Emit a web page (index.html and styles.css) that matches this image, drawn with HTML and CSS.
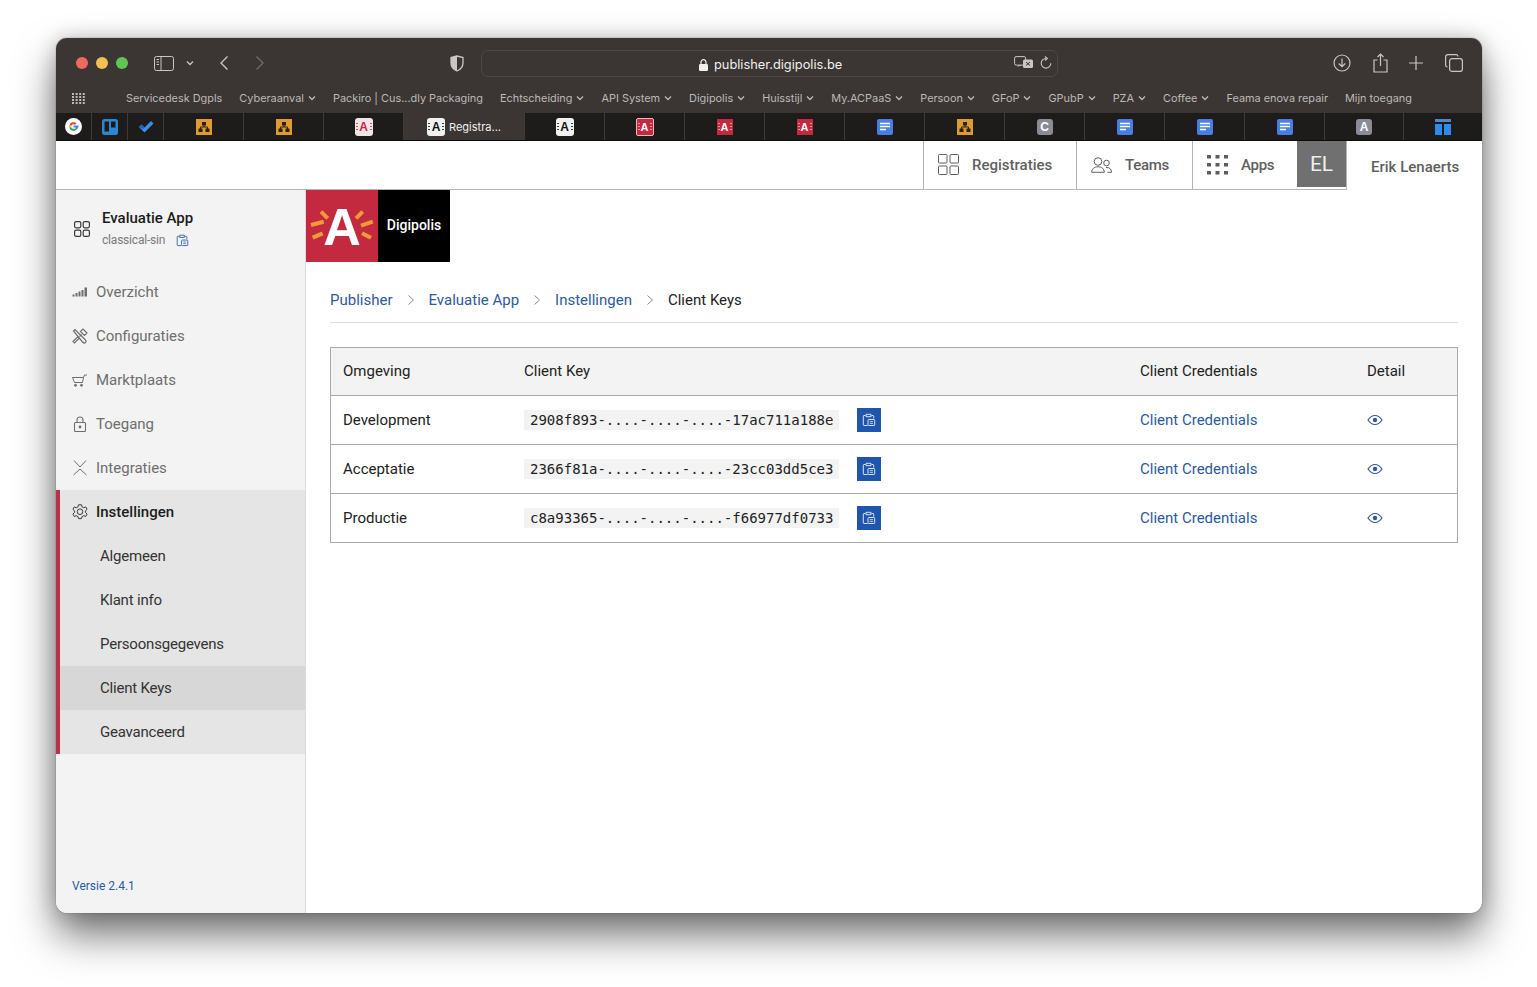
FILE: index.html
```html
<!DOCTYPE html>
<html lang="en">
<head>
    <meta charset="UTF-8">
    <title>Client Keys - Publisher</title>
    <link rel="stylesheet" href="styles.css">
</head>
<body>
    <svg class="defs" width="0" height="0">
        <symbol id="org" viewBox="0 0 16 16">
            <rect width="16" height="16" fill="#dd9b32"/>
            <path d="M6 3h4v3.500H6zM2.500 9.500h4V13h-4zM9.500 9.500h4V13h-4z" fill="#2b2114"/>
            <path d="M8 6v2M4.500 10V8h7v2" stroke="#2b2114" fill="none"/>
        </symbol>
        <symbol id="doc" viewBox="0 0 16 16">
            <rect width="16" height="16" rx="2" fill="#4a7fe0"/>
            <path d="M3 4.500h10M3 7.500h10M3 10.500h6" stroke="#fff" stroke-width="1.600"/>
        </symbol>
        <symbol id="copy" viewBox="0 0 14 14">
            <path d="M3.500 2.500H2a.7.7 0 0 0-.7.7v8.600a.7.7 0 0 0 .7.7h3.500M9.500 2.500H11a.7.7 0 0 1 .7.7v2.300M4 1.300h5v2.400H4z" fill="none" stroke="currentColor"/>
            <rect x="6" y="6.500" width="6.700" height="6" rx=".8" fill="none" stroke="currentColor"/>
            <path d="M7.800 8.600h3.200M7.800 10.400h3.200" stroke="currentColor" stroke-width=".8"/>
        </symbol>
        <symbol id="eye" viewBox="0 0 16 12">
            <path d="M1 6c2-3 4.300-4.500 7-4.500S13 3 15 6c-2 3-4.300 4.500-7 4.500S3 9 1 6z" fill="none" stroke="currentColor" stroke-width="1.200"/>
            <circle cx="8" cy="6" r="2.200" fill="currentColor"/>
        </symbol>
        <symbol id="caret" viewBox="0 0 8 6">
            <path d="M1 1.500 4 4.500 7 1.500" fill="none" stroke="currentColor" stroke-width="1.300"/>
        </symbol>
        <symbol id="crumb" viewBox="0 0 8 12">
            <path d="M1.500 1.500 6.500 6 1.500 10.500" fill="none" stroke="currentColor"/>
        </symbol>
    </svg>

    <div class="window">
        <div class="window-clip">
            <div class="toolbar">
                <div class="lights">
                    <span class="light red"></span>
                    <span class="light yellow"></span>
                    <span class="light green"></span>
                </div>
                <svg class="tool sidebar-toggle" width="20" height="15" viewBox="0 0 20 15"><rect x=".5" y=".5" width="19" height="14" rx="2" fill="none" stroke="currentColor"/><path d="M7 .5v14" stroke="currentColor"/><path d="M2.500 3.500h2.500M2.500 6h2.500M2.500 8.500h2.500" stroke="currentColor"/></svg>
                <svg class="tool sidebar-caret" width="8" height="6"><use href="#caret"/></svg>
                <svg class="tool back" width="10" height="16" viewBox="0 0 10 16"><path d="M8.500 1.500 2 8l6.500 6.500" fill="none" stroke="currentColor" stroke-width="1.400"/></svg>
                <svg class="tool forward" width="10" height="16" viewBox="0 0 10 16"><path d="M1.500 1.500 8 8l-6.500 6.500" fill="none" stroke="currentColor" stroke-width="1.400"/></svg>
                <svg class="tool shield" width="14" height="17" viewBox="0 0 14 17"><path d="M7 1 1 2.500V8c0 4 2.500 6.500 6 8 3.500-1.500 6-4 6-8V2.500z" fill="none" stroke="currentColor" stroke-width="1.300"/><path d="M7 1 1 2.500V8c0 4 2.500 6.500 6 8z" fill="currentColor"/></svg>
                <div class="address">
                    <div class="address-url">
                        <svg width="9" height="12" viewBox="0 0 9 12"><rect y="5" width="9" height="7" rx="1.200" fill="currentColor"/><path d="M2 5.500V3.200a2.500 2.500 0 0 1 5 0v2.300" fill="none" stroke="currentColor" stroke-width="1.200"/></svg>
                        <span>publisher.digipolis.be</span>
                    </div>
                    <svg class="translate" width="20" height="14" viewBox="0 0 20 14"><rect x=".6" y=".6" width="11" height="8.500" rx="1.500" fill="none" stroke="currentColor"/><path d="M3 11l2-2h3z" fill="currentColor"/><rect x="9" y="3.500" width="10" height="8.500" rx="1.500" fill="currentColor"/><path d="M12 6l4 3.500M16 6l-4 3.500" stroke="#3b3533"/></svg>
                    <svg class="reload" width="12" height="14" viewBox="0 0 12 14"><path d="M6 2.500a4.800 4.800 0 1 0 4.800 4.800" fill="none" stroke="currentColor" stroke-width="1.100"/><path d="M5 .5 7.300 2.500 5 4.500" fill="none" stroke="currentColor" stroke-width="1.100"/></svg>
                </div>
                <div class="toolbar-right">
                    <svg width="18" height="18" viewBox="0 0 18 18"><circle cx="9" cy="9" r="8" fill="none" stroke="currentColor" stroke-width="1.200"/><path d="M9 4.500v8M5.800 9.500 9 12.700l3.200-3.200" fill="none" stroke="currentColor" stroke-width="1.200"/></svg>
                    <svg width="15" height="20" viewBox="0 0 15 20"><path d="M4.500 7H1v12h13V7h-3.500M7.500 13V1M4.500 4l3-3 3 3" fill="none" stroke="currentColor" stroke-width="1.200"/></svg>
                    <svg width="14" height="14" viewBox="0 0 14 14"><path d="M7 0v14M0 7h14" stroke="currentColor" stroke-width="1.200"/></svg>
                    <svg width="18" height="18" viewBox="0 0 18 18"><rect x="4.600" y="4.600" width="12.800" height="12.800" rx="2.500" fill="none" stroke="currentColor" stroke-width="1.200"/><path d="M2.500 13A2 2 0 0 1 .6 11V3A2.500 2.500 0 0 1 3 .6h8A2 2 0 0 1 13 2.500" fill="none" stroke="currentColor" stroke-width="1.200"/></svg>
                </div>
            </div>

            <div class="bookmarks">
                <svg class="bm-grid" width="13" height="11" viewBox="0 0 13 11" fill="currentColor"><path d="M0 0h2v2H0zM3.600 0h2v2h-2zM7.200 0h2v2h-2zM10.800 0h2v2h-2zM0 3h2v2H0zM3.600 3h2v2h-2zM7.200 3h2v2h-2zM10.800 3h2v2h-2zM0 6h2v2H0zM3.600 6h2v2h-2zM7.200 6h2v2h-2zM10.800 6h2v2h-2zM0 9h2v2H0zM3.600 9h2v2h-2zM7.200 9h2v2h-2zM10.800 9h2v2h-2z"/></svg>
                <span class="bm">Servicedesk Dgpls</span>
                <span class="bm">Cyberaanval <svg width="8" height="6"><use href="#caret"/></svg></span>
                <span class="bm">Packiro | Cus...dly Packaging</span>
                <span class="bm">Echtscheiding <svg width="8" height="6"><use href="#caret"/></svg></span>
                <span class="bm">API System <svg width="8" height="6"><use href="#caret"/></svg></span>
                <span class="bm">Digipolis <svg width="8" height="6"><use href="#caret"/></svg></span>
                <span class="bm">Huisstijl <svg width="8" height="6"><use href="#caret"/></svg></span>
                <span class="bm">My.ACPaaS <svg width="8" height="6"><use href="#caret"/></svg></span>
                <span class="bm">Persoon <svg width="8" height="6"><use href="#caret"/></svg></span>
                <span class="bm">GFoP <svg width="8" height="6"><use href="#caret"/></svg></span>
                <span class="bm">GPubP <svg width="8" height="6"><use href="#caret"/></svg></span>
                <span class="bm">PZA <svg width="8" height="6"><use href="#caret"/></svg></span>
                <span class="bm">Coffee <svg width="8" height="6"><use href="#caret"/></svg></span>
                <span class="bm">Feama enova repair</span>
                <span class="bm">Mijn toegang</span>
            </div>

            <div class="tabs">
                <div class="tab tab-pin">
                    <svg width="17" height="17" viewBox="0 0 18 18"><circle cx="9" cy="9" r="9" fill="#fff"/><path d="M5.700 8a3.500 3.500 0 0 1 5.700-1.600" fill="none" stroke="#e94235" stroke-width="2.200"/><path d="M5.600 8a3.500 3.500 0 0 0 0 2" fill="none" stroke="#fabb05" stroke-width="2.200"/><path d="M5.600 10a3.500 3.500 0 0 0 5.900 1.500" fill="none" stroke="#34a853" stroke-width="2.200"/><path d="M9 9h4.300a4 4 0 0 1-1.800 2.500" fill="none" stroke="#4285f4" stroke-width="2"/></svg>
                </div>
                <div class="tab tab-pin">
                    <svg width="16" height="16" viewBox="0 0 16 16"><rect width="16" height="16" rx="2.500" fill="#2c86d0"/><rect x="2.500" y="2.500" width="4.500" height="10" fill="#1c1a19"/><rect x="9" y="2.500" width="4.500" height="6" fill="#1c1a19"/></svg>
                </div>
                <div class="tab tab-pin">
                    <svg width="16" height="13" viewBox="0 0 16 13"><path d="M1 7l2.500-2.500 3 3L13 1l2.500 2.500-9 9z" fill="#3b8fe8"/><path d="M1 7l2.500-2.500 3 3-1.500 1.500z" fill="#1e62b8"/></svg>
                </div>
                <div class="tab"><svg width="16" height="16"><use href="#org"/></svg></div>
                <div class="tab"><svg width="16" height="16"><use href="#org"/></svg></div>
                <div class="tab"><span class="fav fav-light">A</span></div>
                <div class="tab tab-active"><span class="fav fav-white">A</span><span class="tab-title">Registra...</span></div>
                <div class="tab"><span class="fav fav-white">A</span></div>
                <div class="tab"><span class="fav fav-red fav-ring">A</span></div>
                <div class="tab"><span class="fav fav-red">A</span></div>
                <div class="tab"><span class="fav fav-red">A</span></div>
                <div class="tab"><svg width="16" height="16"><use href="#doc"/></svg></div>
                <div class="tab"><svg width="16" height="16"><use href="#org"/></svg></div>
                <div class="tab"><span class="fav fav-gray">C</span></div>
                <div class="tab"><svg width="16" height="16"><use href="#doc"/></svg></div>
                <div class="tab"><svg width="16" height="16"><use href="#doc"/></svg></div>
                <div class="tab"><svg width="16" height="16"><use href="#doc"/></svg></div>
                <div class="tab tab-narrow"><span class="fav fav-gray">A</span></div>
                <div class="tab tab-last">
                    <svg width="16" height="16" viewBox="0 0 16 16"><rect width="16" height="3" fill="#4f86c6"/><rect y="5" width="7" height="11" fill="#2e8bea"/><rect x="9" y="5" width="7" height="11" fill="#2e8bea"/></svg>
                </div>
            </div>

            <header class="app-header">
                <div class="header-space"></div>
                <a class="header-item item-registraties">
                    <svg width="21" height="21" viewBox="0 0 21 21" fill="none" stroke="currentColor"><rect x=".5" y=".5" width="8.500" height="8.500" rx="1"/><rect x="12" y=".5" width="8.500" height="8.500" rx="1"/><rect x=".5" y="12" width="8.500" height="8.500" rx="1"/><rect x="12" y="12" width="8.500" height="8.500" rx="1"/></svg>
                    Registraties
                </a>
                <a class="header-item item-teams">
                    <svg width="21" height="16" viewBox="0 0 21 16" fill="none" stroke="currentColor"><circle cx="7" cy="4.500" r="3.800"/><path d="M.7 15.300c0-3.500 2.500-5.500 6.300-5.500s6.300 2 6.300 5.500z"/><circle cx="15.500" cy="6" r="2.800"/><path d="M15 10.500c3.500-.3 5.500 1.500 5.500 4.800h-4"/></svg>
                    Teams
                </a>
                <a class="header-item item-apps">
                    <svg width="21" height="20" viewBox="0 0 21 20" fill="currentColor"><path d="M0 0h4v3.500H0zM8.500 0h4v3.500h-4zM17 0h4v3.500h-4zM0 8h4v3.500H0zM8.500 8h4v3.500h-4zM17 8h4v3.500h-4zM0 16h4v3.500H0zM8.500 16h4v3.500h-4zM17 16h4v3.500h-4z"/></svg>
                    Apps
                </a>
                <div class="avatar-wrap"><div class="avatar">EL</div></div>
                <div class="user-name">Erik Lenaerts</div>
            </header>

            <div class="app-body">
                <aside class="sidebar">
                    <div class="app-info">
                        <svg width="16" height="16" viewBox="0 0 16 16" fill="none" stroke="#3a3a3a" stroke-width="1.200"><rect x=".6" y=".6" width="6.200" height="6.200" rx="1.500"/><rect x="9.200" y=".6" width="6.200" height="6.200" rx="1.500"/><rect x=".6" y="9.200" width="6.200" height="6.200" rx="1.500"/><rect x="9.200" y="9.200" width="6.200" height="6.200" rx="1.500"/></svg>
                        <div>
                            <div class="app-title">Evaluatie App</div>
                            <div class="app-sub">classical-sin <svg class="app-copy" width="13" height="13"><use href="#copy"/></svg></div>
                        </div>
                    </div>

                    <nav>
                        <a class="nav-item">
                            <svg width="16" height="10" viewBox="0 0 16 10" fill="currentColor"><path d="M.5 7.500h2v2h-2zM3.500 6h2v3.500h-2zM6.500 4.500h2v5h-2zM9.500 3h2v6.500h-2zM12.500.5H15v9h-2.500z"/></svg>
                            Overzicht
                        </a>
                        <a class="nav-item">
                            <svg width="16" height="16" viewBox="0 0 16 16" fill="none" stroke="currentColor" stroke-width="1.200"><path d="M1 13.500 5.500 9l1.500 1.500-4.500 4.500zM7.500 8.500l2-2M8.500 3.500l2.500-2.500 4 4-2.500 2.500z"/><path d="M1.500 3 3 1.500l10 10c1 1 1.500 2 .5 3s-2 .5-3-.5z"/></svg>
                            Configuraties
                        </a>
                        <a class="nav-item">
                            <svg width="16" height="13" viewBox="0 0 16 13" fill="none" stroke="currentColor"><path d="M.5 3.500h11l-1 5h-8zM11.500 3.500 12.500 1h2.500"/><circle cx="3.500" cy="11.300" r="1" fill="currentColor"/><circle cx="9.500" cy="11.300" r="1" fill="currentColor"/></svg>
                            Marktplaats
                        </a>
                        <a class="nav-item">
                            <svg width="16" height="16" viewBox="0 0 15 16" fill="none" stroke="currentColor" stroke-width="1.100"><rect x="2" y="6.500" width="11" height="9" rx="1"/><path d="M4.500 6.500V4a3 3 0 0 1 6 0v2.500"/><circle cx="7.500" cy="11" r=".9" fill="currentColor"/></svg>
                            Toegang
                        </a>
                        <a class="nav-item">
                            <svg width="16" height="16" viewBox="0 0 15 16" fill="none" stroke="currentColor"><path d="M1.500 .5 7.500 7l6-6.500M1 15l6.500-6 6.500 6"/></svg>
                            Integraties
                        </a>
                        <div class="nav-group">
                            <a class="nav-item nav-head">
                                <svg width="16" height="16" viewBox="0 0 16 16" fill="none" stroke="currentColor"><path d="M6.500 .8h3l.5 2 1.800.9 1.900-.8 1.400 2.400-1.500 1.400v2l1.500 1.400-1.400 2.400-1.900-.8-1.800.9-.5 2h-3l-.5-2-1.800-.9-1.900.8L.9 10.100l1.500-1.400v-2L.9 5.300l1.400-2.400 1.900.8 1.800-.9z"/><circle cx="8" cy="7.700" r="2.800"/></svg>
                                Instellingen
                            </a>
                            <a class="nav-sub">Algemeen</a>
                            <a class="nav-sub">Klant info</a>
                            <a class="nav-sub">Persoonsgegevens</a>
                            <a class="nav-sub is-current">Client Keys</a>
                            <a class="nav-sub">Geavanceerd</a>
                        </div>
                    </nav>

                    <div class="version">Versie 2.4.1</div>
                </aside>

                <main class="content">
                    <div class="logo">
                        <div class="logo-mark">
                            <svg width="72" height="72" viewBox="0 0 72 72">
                                <text class="logo-a" x="36" y="55" text-anchor="middle">A</text>
                                <path class="logo-rays" d="M15 21.700l6.700 6.600M5 35l12.700-3.300M6.700 47.700l10-4.400M56.700 21.700 50 28.300M66.700 31.700 55 35.700M65 47.700l-9-4.400"/>
                            </svg>
                        </div>
                        <div class="logo-name">Digipolis</div>
                    </div>

                    <div class="breadcrumb">
                        <a>Publisher</a>
                        <svg width="8" height="12"><use href="#crumb"/></svg>
                        <a>Evaluatie App</a>
                        <svg width="8" height="12"><use href="#crumb"/></svg>
                        <a>Instellingen</a>
                        <svg width="8" height="12"><use href="#crumb"/></svg>
                        <span>Client Keys</span>
                    </div>

                    <table class="keys">
                        <thead>
                            <tr>
                                <th class="col-env">Omgeving</th>
                                <th class="col-key">Client Key</th>
                                <th class="col-cred">Client Credentials</th>
                                <th>Detail</th>
                            </tr>
                        </thead>
                        <tbody>
                            <tr>
                                <td>Development</td>
                                <td><div class="key-cell"><code>2908f893-....-....-....-17ac711a188e</code><button type="button" class="copy"><svg width="14" height="14"><use href="#copy"/></svg></button></div></td>
                                <td><a>Client Credentials</a></td>
                                <td><svg class="eye" width="16" height="12"><use href="#eye"/></svg></td>
                            </tr>
                            <tr>
                                <td>Acceptatie</td>
                                <td><div class="key-cell"><code>2366f81a-....-....-....-23cc03dd5ce3</code><button type="button" class="copy"><svg width="14" height="14"><use href="#copy"/></svg></button></div></td>
                                <td><a>Client Credentials</a></td>
                                <td><svg class="eye" width="16" height="12"><use href="#eye"/></svg></td>
                            </tr>
                            <tr>
                                <td>Productie</td>
                                <td><div class="key-cell"><code>c8a93365-....-....-....-f66977df0733</code><button type="button" class="copy"><svg width="14" height="14"><use href="#copy"/></svg></button></div></td>
                                <td><a>Client Credentials</a></td>
                                <td><svg class="eye" width="16" height="12"><use href="#eye"/></svg></td>
                            </tr>
                        </tbody>
                    </table>
                </main>
            </div>
        </div>
    </div>
</body>
</html>
```

FILE: styles.css
```css
html, body {
    margin: 0;
    height: 100%;
    background: #fff;
    overflow: hidden;
}

body {
    padding: 38px 0 0 56px;
    box-sizing: border-box;
    font-family: Roboto, sans-serif;
    font-size: 15px;
    color: #222;
}

.defs {
    display: block;
    height: 0;
}

.window {
    width: 1426px;
    height: 875px;
    border-radius: 11px;
    background: #fff;
    box-shadow: 0 0 1px rgba(0, 0, 0, 0.7), 0 22px 40px rgba(0, 0, 0, 0.55), 0 0 20px rgba(0, 0, 0, 0.2);
}

.window-clip {
    height: 100%;
    display: flex;
    flex-direction: column;
    border-radius: 11px;
    overflow: hidden;
}

/* browser toolbar */
.toolbar {
    height: 46px;
    flex: none;
    display: flex;
    align-items: center;
    background: #3b3533;
    color: #c9c6c4;
    padding-top: 4px;
    box-sizing: border-box;
}

.lights {
    display: flex;
    gap: 8px;
    margin-left: 20px;
}

.light {
    width: 12px;
    height: 12px;
    border-radius: 50%;
}

.red { background: #ed6a5e; }
.yellow { background: #f4bf4f; }
.green { background: #61c554; }

.sidebar-toggle { margin-left: 26px; }
.sidebar-caret { margin-left: 12px; }
.back { margin-left: 25px; }
.forward { margin-left: 26px; color: #6f6a68; }
.shield { margin-left: 185px; }

.address {
    width: 577px;
    height: 27px;
    margin-left: 17px;
    box-sizing: border-box;
    border: 1px solid #4e4946;
    border-radius: 7px;
    display: flex;
    align-items: center;
    position: relative;
    color: #f1f0ef;
}

.address-url {
    position: absolute;
    left: 217px;
    top: 5px;
    display: flex;
    align-items: center;
    gap: 6px;
    font-family: Inter, sans-serif;
    font-size: 12.8px;
    line-height: 18px;
}

.translate {
    margin-left: 532px;
    color: #c9c6c4;
}

.reload {
    margin-left: 6px;
    color: #c9c6c4;
}

.toolbar-right {
    display: flex;
    align-items: center;
    gap: 21.5px;
    margin-left: 275px;
}

/* bookmarks bar */
.bookmarks {
    height: 29px;
    flex: none;
    display: flex;
    align-items: center;
    background: #3b3533;
    color: #bcb9b7;
    font-family: Inter, sans-serif;
    font-size: 10.9px;
    padding: 0 0 1px 16px;
    box-sizing: border-box;
}

.bm-grid {
    margin-right: 41px;
}

.bm {
    margin-right: 17px;
    white-space: nowrap;
    display: flex;
    align-items: center;
    gap: 4px;
}

/* tab strip */
.tabs {
    height: 28px;
    flex: none;
    display: flex;
    background: #1e1c1b;
    border-bottom: 1px solid #0c0c0c;
    box-sizing: border-box;
}

.tab {
    width: 80px;
    flex: none;
    display: flex;
    align-items: center;
    justify-content: center;
    border-right: 1px solid #3f3b39;
    box-sizing: border-box;
}

.tab-pin { width: 36px; }
.tab-narrow { width: 79px; }
.tab-last { flex: 1; border-right: 0; }

.tab-active {
    width: 121px;
    background: #3b3533;
    gap: 4px;
}

.tab-title {
    color: #f1f0ef;
    font-family: Inter, sans-serif;
    font-size: 11px;
}

.fav {
    position: relative;
    width: 18px;
    height: 18px;
    display: flex;
    align-items: center;
    justify-content: center;
    border-radius: 3px;
    font-family: "Liberation Sans", sans-serif;
    font-size: 12px;
    font-weight: bold;
}

/* little rays either side of the A */
.fav::before,
.fav::after {
    content: "";
    position: absolute;
    top: 5px;
    width: 2px;
    height: 8px;
    background: repeating-linear-gradient(currentColor 0 1px, transparent 1px 3px);
    opacity: 0.8;
}

.fav::before { left: 1px; }
.fav::after { right: 1px; }

.fav-light { background: #f3e4e6; color: #c8273f; }
.fav-white { background: #f1f1f1; color: #111; }
.fav-red { background: #c42a3f; color: #fff; width: 16px; height: 16px; border-radius: 0; font-size: 11px; }
.fav-red::before, .fav-red::after { top: 4px; left: 1px; opacity: 0.5; }
.fav-red::after { left: auto; right: 1px; }
.fav-ring { width: 18px; height: 18px; border: 1px solid #e8b9bf; border-radius: 2px; box-sizing: border-box; }
.fav-gray { background: #8b8b96; color: #fff; width: 16px; height: 16px; }
.fav-gray::before, .fav-gray::after { display: none; }

/* app header */
.app-header {
    height: 49px;
    flex: none;
    display: flex;
    color: #5f5f5f;
    font-weight: 500;
    background: #fff;
}

.header-space {
    flex: 1;
    border-bottom: 1px solid #b5b5b5;
}

.header-item {
    display: flex;
    align-items: center;
    box-sizing: border-box;
    border-left: 1px solid #b5b5b5;
    border-bottom: 1px solid #b5b5b5;
    padding: 0 0 1px 14px;
}

.item-registraties { width: 153px; gap: 13px; }
.item-teams { width: 116px; gap: 13px; letter-spacing: -0.3px; }
.item-apps { width: 105px; gap: 13px; letter-spacing: -0.3px; }

.avatar-wrap {
    width: 49px;
    border-bottom: 1px solid #b5b5b5;
    box-sizing: border-box;
    padding-bottom: 2px;
}

.avatar {
    height: 46px;
    background: #707070;
    color: #eee;
    font-size: 21px;
    font-weight: 400;
    display: flex;
    align-items: center;
    justify-content: center;
}

.user-name {
    width: 136px;
    box-sizing: border-box;
    padding: 17px 0 0 24px;
    border-left: 1px solid #b5b5b5;
}

/* sidebar */
.app-body {
    flex: 1;
    display: flex;
    min-height: 0;
}

.sidebar {
    width: 250px;
    flex: none;
    box-sizing: border-box;
    background: #f3f3f3;
    border-right: 1px solid #dcdcdc;
    display: flex;
    flex-direction: column;
    color: #6e6e6e;
}

.app-info {
    height: 80px;
    box-sizing: border-box;
    display: flex;
    align-items: center;
    gap: 12px;
    padding: 0 0 2px 18px;
}

.app-title {
    font-weight: 500;
    color: #1c1c1c;
    line-height: 22px;
}

.app-sub {
    font-size: 12px;
    letter-spacing: -0.2px;
    color: #7a7a7a;
    line-height: 22px;
    display: flex;
    align-items: center;
    gap: 11px;
}

.app-copy {
    color: #3767ad;
}

.nav-item {
    height: 44px;
    display: flex;
    align-items: center;
    gap: 8px;
    padding-left: 16px;
    color: #6e6e6e;
}

.nav-group {
    background: #e5e5e5;
    border-left: 4px solid #b8334a;
}

.nav-head {
    padding-left: 12px;
    color: #1c1c1c;
    font-weight: 500;
}

.nav-head svg {
    color: #3a3a3a;
}

.nav-sub {
    height: 44px;
    display: flex;
    align-items: center;
    padding-left: 40px;
    letter-spacing: -0.2px;
    color: #333;
}

.is-current {
    background: #d7d7d7;
}

.version {
    margin-top: auto;
    padding: 0 0 20px 16px;
    font-size: 12px;
    color: #2c5a9c;
}

/* main column */
.content {
    flex: 1;
    padding: 0 24px;
    min-width: 0;
}

.logo {
    display: flex;
    margin-left: -24px;
    height: 72px;
}

.logo-mark {
    width: 72px;
    background: #c42a3f;
}

.logo-a {
    font-family: "Liberation Sans", sans-serif;
    font-size: 52px;
    font-weight: bold;
    fill: #fff;
}

.logo-rays {
    stroke: #f09a38;
    stroke-width: 4;
    fill: none;
}

.logo-name {
    width: 72px;
    box-sizing: border-box;
    padding-bottom: 2px;
    background: #000;
    color: #fff;
    font-size: 14px;
    font-weight: 500;
    display: flex;
    align-items: center;
    justify-content: center;
}

.breadcrumb {
    height: 61px;
    box-sizing: border-box;
    display: flex;
    align-items: center;
    gap: 14px;
    padding-top: 16px;
    border-bottom: 1px solid #dcdcdc;
}

.breadcrumb a {
    color: #2c5a9c;
}

.breadcrumb svg {
    color: #8c8c8c;
}

.keys {
    width: 100%;
    margin-top: 24px;
    border-collapse: collapse;
    table-layout: fixed;
    border: 1px solid #aaa;
}

.keys th {
    height: 45px;
    padding: 0 12px 2px;
    background: #f3f3f3;
    border-bottom: 1px solid #aaa;
    font-weight: 400;
    text-align: left;
}

.keys td {
    height: 48px;
    padding: 0 12px;
    border-bottom: 1px solid #aaa;
}

.col-env { width: 157px; }
.col-key { width: 592px; }
.col-cred { width: 203px; }

.keys a {
    color: #2c5a9c;
}

.key-cell {
    display: flex;
    align-items: center;
    gap: 18px;
}

code {
    width: 315px;
    height: 20px;
    box-sizing: border-box;
    padding: 0 6px;
    background: #f3f3f3;
    font-family: "DejaVu Sans Mono", monospace;
    font-size: 14px;
    line-height: 20px;
    white-space: nowrap;
}

.copy {
    width: 24px;
    height: 24px;
    padding: 0;
    border: 0;
    background: #1f56ab;
    color: #d9e4f5;
    display: flex;
    align-items: center;
    justify-content: center;
}

.eye {
    display: block;
    color: #2c5a9c;
}
```
